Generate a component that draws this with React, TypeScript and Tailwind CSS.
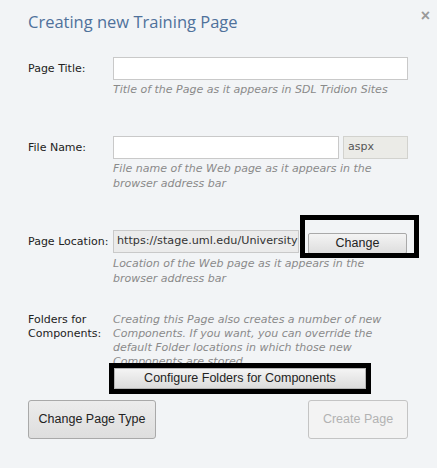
import React from 'react';

const labelCls = "text-[11px] text-[#222] leading-[14px]";
const hintCls = "text-[11px] italic text-[#8a8a8a] leading-[15px]";
const inputCls = "h-[23px] border border-[#c9c9c9] bg-white";

export default function App() {
  return (
    <div className="relative w-[437px] h-[468px] bg-[#f2f4f6] pl-[28px] pr-[29px] pt-[11px] font-['DejaVu_Sans',sans-serif] overflow-hidden">
      <span className="absolute right-[7px] top-[4px] text-[16px] font-bold text-[#9a9a9a] font-['Liberation_Sans',sans-serif]">×</span>

      <h1 className="text-[16.5px] leading-[22px] text-[#4f719b] font-['Open_Sans',sans-serif]">
        Creating new Training Page
      </h1>

      <div className="mt-[24px] grid grid-cols-[85px_1fr]">
        <div className={`${labelCls} h-[23px] flex items-center`}>Page Title:</div>
        <div>
          <div className={inputCls} />
          <p className={`${hintCls} mt-[2px]`}>Title of the Page as it appears in SDL Tridion Sites</p>
        </div>
      </div>

      <div className="mt-[39px] grid grid-cols-[85px_1fr]">
        <div className={`${labelCls} h-[23px] flex items-center`}>File Name:</div>
        <div>
          <div className="flex gap-[4px]">
            <div className={`${inputCls} flex-1`} />
            <div className="h-[23px] w-[65px] border border-[#d2d2ce] bg-[#ebebe7] text-[11px] text-[#555] flex items-center pl-[4px]">aspx</div>
          </div>
          <p className={`${hintCls} mt-[2px]`}>
            File name of the Web page as it appears in the<br />browser address bar
          </p>
        </div>
      </div>

      <div className="mt-[39px] grid grid-cols-[85px_1fr]">
        <div className={`${labelCls} h-[23px] flex items-center`}>Page Location:</div>
        <div>
          <div className="flex">
            <div className="h-[23px] w-[186px] border border-[#c9c9c9] bg-[#ebebeb] text-[11.2px] text-[#333] flex items-center pl-[3px] overflow-hidden whitespace-nowrap">
              https://stage.uml.edu/University
            </div>
            <div className="relative ml-[9px]">
              <button className="w-[99px] h-[21px] border border-[#a9a9a9] rounded-[2px] bg-gradient-to-b from-[#f4f4f4] to-[#dedede] text-[12.5px] text-[#222] font-['Liberation_Sans',sans-serif]">
                Change
              </button>
              <div className="absolute left-[-8px] top-[-15px] w-[119px] h-[43px] border-[5px] border-black" />
            </div>
          </div>
          <p className={`${hintCls} mt-[2px]`}>
            Location of the Web page as it appears in the<br />browser address bar
          </p>
        </div>
      </div>

      <div className="mt-[26px] grid grid-cols-[85px_1fr]">
        <div className={`${labelCls} leading-[14px] pt-[1px]`}>Folders for<br />Components:</div>
        <p className="text-[11px] italic text-[#8a8a8a] leading-[14px] pt-[1px]">
          Creating this Page also creates a number of new Components. If you want, you can override the default Folder locations in which those new Components are stored
        </p>
      </div>

      <div className="relative mt-[-6px] ml-[81px] w-[262px] h-[31px] border-[5px] border-black bg-black">
        <button className="block w-full h-full border border-[#b5b5b5] bg-gradient-to-b from-[#f4f4f4] to-[#dcdcdc] text-[12.5px] text-[#222] font-['Liberation_Sans',sans-serif]">
          Configure Folders for Components
        </button>
      </div>

      <div className="mt-[6px] flex justify-between">
        <button className="w-[128px] h-[39px] border border-[#a9a9a9] rounded-[3px] bg-gradient-to-b from-[#ececec] to-[#dedede] text-[12.5px] text-[#222] font-['Liberation_Sans',sans-serif]">
          Change Page Type
        </button>
        <button className="w-[100px] h-[39px] border border-[#c4c4c4] rounded-[3px] bg-[#f3f3f3] text-[12.5px] text-[#b2b2b2] font-['Liberation_Sans',sans-serif]">
          Create Page
        </button>
      </div>
    </div>
  );
}
